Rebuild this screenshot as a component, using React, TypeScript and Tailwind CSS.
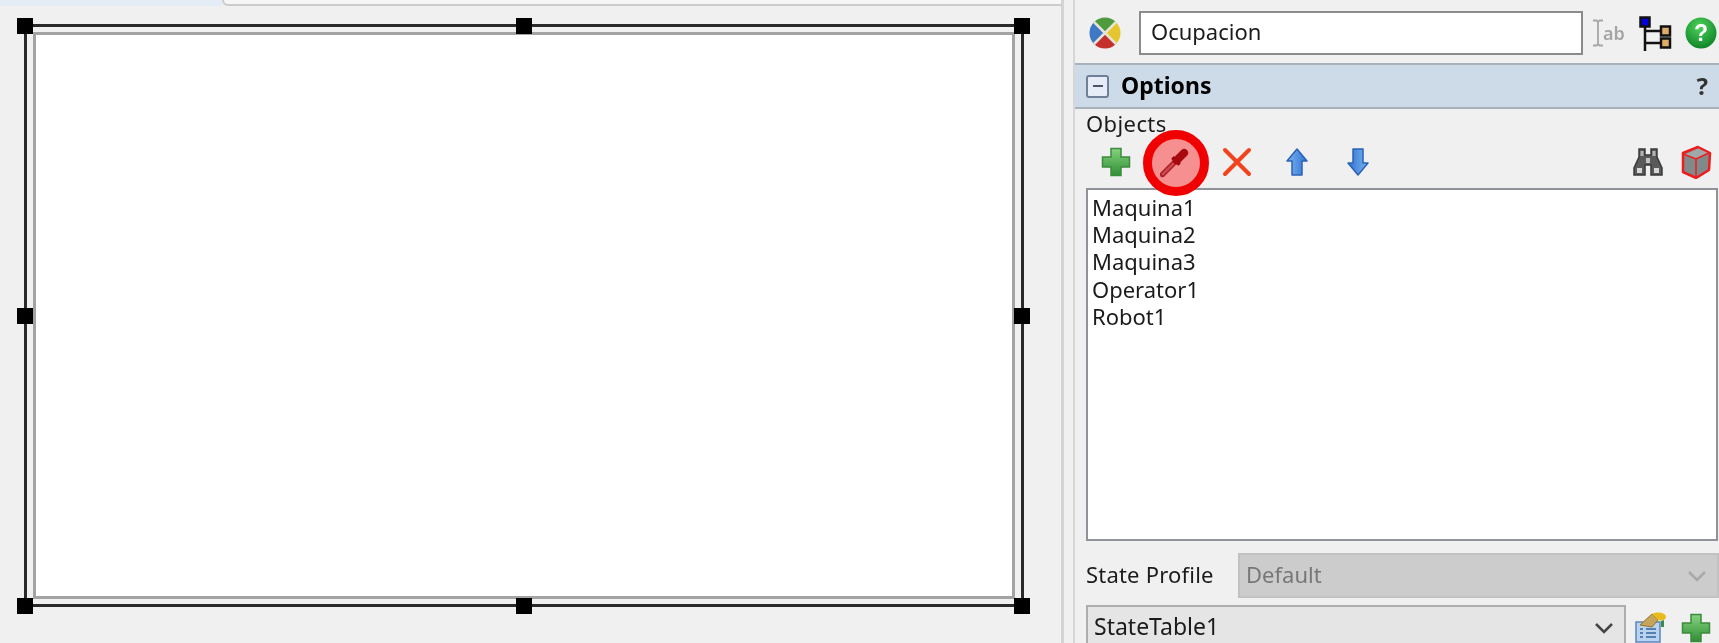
const objects = ['Maquina1', 'Maquina2', 'Maquina3', 'Operator1', 'Robot1']

const handles = [
  'left-[-9.500px] top-[-9.500px]',
  'left-1/2 top-[-9.500px] -translate-x-1/2',
  'right-[-9.500px] top-[-9.500px]',
  'left-[-9.500px] top-1/2 -translate-y-1/2',
  'right-[-9.500px] top-1/2 -translate-y-1/2',
  'left-[-9.500px] bottom-[-9.500px]',
  'left-1/2 bottom-[-9.500px] -translate-x-1/2',
  'right-[-9.500px] bottom-[-9.500px]',
]

function PlusIcon({ id }: { id: string }) {
  return (
    <svg width="30" height="30" viewBox="0 0 30 30">
      <defs>
        <linearGradient id={id} x1="0" y1="0" x2="0" y2="1">
          <stop offset="0" stopColor="#86d27f" />
          <stop offset="1" stopColor="#2f8f35" />
        </linearGradient>
      </defs>
      <path
        d="M10 1.500h10v8.500h8.500v10H20v8.500H10V20H1.500V10H10z"
        fill={`url(#${id})`}
        stroke="#3c8a3c"
        strokeWidth="1.500"
      />
    </svg>
  )
}

function Dropper() {
  return (
    <svg width="36" height="36" viewBox="0 0 36 36">
      <path d="M3 33L19 17" stroke="#6e3a44" strokeWidth="6.500" strokeLinecap="round" />
      <path d="M3.500 32.500L19 17" stroke="#b27580" strokeWidth="3" strokeLinecap="round" />
      <path d="M15 12.500l8.500 8.500" stroke="#4f0810" strokeWidth="4.500" />
      <path d="M20 16l9-9" stroke="#6e0f18" strokeWidth="9.500" strokeLinecap="round" />
    </svg>
  )
}

function CrossIcon() {
  return (
    <svg width="30" height="30" viewBox="0 0 30 30">
      <path d="M3 3l24 24M27 3L3 27" stroke="#f0431e" strokeWidth="4" strokeLinecap="round" />
    </svg>
  )
}

function ArrowIcon({ down = false }: { down?: boolean }) {
  const id = down ? 'arrowDown' : 'arrowUp'
  return (
    <svg width="24" height="30" viewBox="0 0 24 30" className={down ? 'rotate-180' : ''}>
      <defs>
        <linearGradient id={id} x1="0" y1="0" x2="1" y2="0">
          <stop offset="0" stopColor="#7db4f2" />
          <stop offset="1" stopColor="#2f72cf" />
        </linearGradient>
      </defs>
      <path d="M12 2L22 14h-5v14H7V14H2z" fill={`url(#${id})`} stroke="#2a62b8" strokeWidth="1.500" strokeLinejoin="round" />
    </svg>
  )
}

function Binoculars() {
  return (
    <svg width="32" height="30" viewBox="0 0 32 30">
      <path d="M7 2h6v6h6V2h6v8l5 11v7H19V18h-6v10H2v-7L7 10z" fill="#5a5a5a" stroke="#3a3a3a" strokeWidth="1.500" />
      <rect x="8.500" y="4" width="3" height="5" fill="#b5b5b5" />
      <rect x="20.500" y="4" width="3" height="5" fill="#b5b5b5" />
      <rect x="5" y="21" width="5" height="5" fill="#d6d6d6" />
      <rect x="22" y="21" width="5" height="5" fill="#d6d6d6" />
      <rect x="14" y="11" width="4" height="5" fill="#c4c4c4" />
    </svg>
  )
}

function Cube() {
  return (
    <svg width="32" height="34" viewBox="0 0 32 34">
      <path d="M3 8L18 2l12 6-1 17-13 8-13-6z" fill="#808a8a" stroke="#f01c1c" strokeWidth="2.500" strokeLinejoin="round" />
      <path d="M5 9.500L18 3.500l10 4.500-12 5.500z" fill="#a0a8a8" />
      <path d="M3 9l13 5 13-6M16 14v19" fill="none" stroke="#f01c1c" strokeWidth="1.500" />
    </svg>
  )
}

function ColorBall() {
  return (
    <svg width="32" height="32" viewBox="0 0 32 32">
      <clipPath id="ball">
        <circle cx="16" cy="16" r="15.500" />
      </clipPath>
      <g clipPath="url(#ball)">
        <path d="M16 16L0 0h32z" fill="#4f9a3c" />
        <path d="M16 16L32 0v32z" fill="#e6c62e" />
        <path d="M16 16L32 32H0z" fill="#c4302b" />
        <path d="M16 16L0 32V0z" fill="#3f78c4" />
      </g>
      <path d="M16 16L5 5M16 16l11-11M16 16l11 11M16 16L5 27" stroke="#e4e4d8" strokeWidth="2.500" />
    </svg>
  )
}

function RenameIcon() {
  return (
    <svg width="36" height="28" viewBox="0 0 36 28">
      <path d="M2 1.500h3.500L7 3l1.500-1.500H12M7 3v22M2 26.500h3.500L7 25l1.500 1.500H12" fill="none" stroke="#a6a6a6" strokeWidth="1.800" />
      <text x="12" y="21" fontSize="18" fontWeight="600" fill="#a5a5a5" fontFamily="Noto Sans, sans-serif">ab</text>
    </svg>
  )
}

function TreeIcon() {
  return (
    <svg width="33" height="35" viewBox="0 0 33 35">
      <path d="M6 8v27M6 15h20M6 27h20" stroke="#111" strokeWidth="2.500" />
      <rect x="1.500" y="1.500" width="9" height="9" fill="#0000e0" stroke="#111" strokeWidth="2.500" />
      <rect x="22" y="10.500" width="9" height="9" fill="#e0ad66" stroke="#111" strokeWidth="2.500" />
      <rect x="22" y="22.500" width="9" height="9" fill="#e0ad66" stroke="#111" strokeWidth="2.500" />
    </svg>
  )
}

function HelpIcon() {
  return (
    <svg width="32" height="32" viewBox="0 0 32 32">
      <defs>
        <radialGradient id="green" cx="0.450" cy="0.300" r="0.800">
          <stop offset="0" stopColor="#4fd25c" />
          <stop offset="1" stopColor="#067a20" />
        </radialGradient>
      </defs>
      <circle cx="16" cy="16" r="15.500" fill="url(#green)" />
      <text x="16" y="24" textAnchor="middle" fontSize="23" fontWeight="700" fill="#fff" fontFamily="Liberation Sans, sans-serif">?</text>
    </svg>
  )
}

function TableIcon() {
  return (
    <svg width="34" height="31" viewBox="0 0 34 31">
      <rect x="2" y="10" width="24" height="20" fill="#b9d2ee" stroke="#5a86bd" strokeWidth="1.500" />
      <path d="M6 17h3M12 17h10M6 21h3M12 21h10M6 25h3M12 25h10" stroke="#34659f" strokeWidth="1.500" />
      <path d="M6 13L18 2l6 6-6 7z" fill="#c6a45a" stroke="#8f7430" strokeWidth="1" />
      <path d="M18 2c6-3 14-1 14 3 0 3-5 4-8 3z" fill="#e8bc20" />
      <path d="M30 8v7h-3V9z" fill="#3f8a50" />
    </svg>
  )
}

function Chevron({ muted = false }: { muted?: boolean }) {
  return (
    <svg width="20" height="12" viewBox="0 0 20 12">
      <path d="M2 2l8 8 8-8" fill="none" stroke={muted ? '#a9a9a9' : '#444'} strokeWidth="2.500" />
    </svg>
  )
}

export default function App() {
  return (
    <div className="flex h-[643px] w-[1719px] overflow-hidden bg-[#f0f0f0] font-['Noto_Sans',sans-serif] text-[22px] leading-none text-[#1b1b1b] blur-[0.6px]">
      {/* canvas side */}
      <div className="flex h-full w-[1075px] shrink-0 border-r-[2px] border-r-[#d6d6d6] pr-[9px]">
        <div className="flex h-full flex-1 flex-col border-r-[3px] border-r-[#d4d4d4]">
          <div className="flex h-[6px] shrink-0">
            <div className="w-[222px] bg-[#e4edf6]" />
            <div className="flex-1 rounded-bl-md border-b-[2px] border-l-[2px] border-[#cccccc] bg-[#f6f6f6]" />
          </div>
          <div className="relative ml-[23.500px] mt-[18px] h-[583px] w-[1000px] border-[3px] border-[#2a2a2a]">
            <div className="mx-[6px] my-[5px] h-[calc(100%-10px)] border-[3px] border-[#a3a3a3] bg-white" />
            {handles.map((pos) => (
              <div key={pos} className={`absolute h-[16px] w-[16px] bg-black ${pos}`} />
            ))}
          </div>
        </div>
      </div>

      {/* properties side */}
      <div className="flex min-w-0 flex-1 flex-col">
        <div className="flex h-[63px] shrink-0 items-center pl-[14px] pt-[3px]">
          <ColorBall />
          <div className="ml-[18px] flex h-[44px] w-[444px] items-center border-[2px] border-[#8b8b8b] bg-white pb-[4px] pl-[10px]">
            Ocupacion
          </div>
          <div className="ml-[8px]"><RenameIcon /></div>
          <div className="ml-[12px]"><TreeIcon /></div>
          <div className="ml-[13px]"><HelpIcon /></div>
        </div>

        <div className="flex h-[46px] shrink-0 items-center border-y-[2px] border-y-[#a9b1ba] bg-[#cddbe8] pl-[11px] pr-[11px]">
          <div className="flex h-[23px] w-[23px] items-center justify-center rounded-[3px] border-[2px] border-[#6f8098] bg-[#e6edf6]">
            <div className="h-[2px] w-[10px] bg-[#4a5568]" />
          </div>
          <span className="ml-[12px] pb-[2px] text-[23px] font-bold text-black">Options</span>
          <span className="ml-auto text-[24px] font-bold text-[#333]">?</span>
        </div>

        <div className="relative flex min-h-0 flex-1 flex-col pl-[11px]">
          <div className="mt-[3px] h-[22px] tracking-[0.4px]">Objects</div>

          <div className="mt-[9px] flex h-[38px] shrink-0 items-center pl-[15px] pr-[7px]">
            <div className="flex w-[30px] justify-center"><PlusIcon id="plusTop" /></div>
            <div className="ml-[29px] flex w-[30px] justify-center"><Dropper /></div>
            <div className="ml-[32px] flex w-[30px] justify-center"><CrossIcon /></div>
            <div className="ml-[30px] flex w-[30px] justify-center"><ArrowIcon /></div>
            <div className="ml-[31px] flex w-[30px] justify-center"><ArrowIcon down /></div>
            <div className="ml-auto"><Binoculars /></div>
            <div className="ml-[16px]"><Cube /></div>
          </div>

          <div className="mr-[1px] mt-[7px] h-[353px] shrink-0 border-[2px] border-[#8f9298] bg-white pl-[4px] pt-[5px]">
            {objects.map((name) => (
              <div key={name} className="flex h-[27.4px] items-center pb-[4px]">{name}</div>
            ))}
          </div>

          <div className="mt-[12px] flex h-[45px] shrink-0 items-center">
            <span className="w-[152px] pb-[4px] tracking-[0.2px]">State Profile</span>
            <div className="flex h-full flex-1 items-center justify-between border-[2px] border-[#c2c2c2] bg-[#cccccc] pl-[6px] pr-[10px] text-[#777]">
              <span className="pb-[3px]">Default</span>
              <Chevron muted />
            </div>
          </div>

          <div className="mt-[7px] flex h-[50px] shrink-0 items-start">
            <div className="flex h-full w-[540px] items-center justify-between border-[2px] border-[#adadad] bg-[#e5e5e5] pb-[4px] pl-[6px] pr-[10px] text-[23px]">
              <span className="pb-[4px]">StateTable1</span>
              <Chevron />
            </div>
            <div className="ml-[8px] mt-[7px]"><TableIcon /></div>
            <div className="ml-[13px] mt-[8px]"><PlusIcon id="plusBottom" /></div>
          </div>

          {/* red annotation round the dropper */}
          <div className="absolute left-[68px] top-[21px] h-[66px] w-[66px] rounded-full border-[9px] border-[#f00000] bg-[#ff0000]/40" />
        </div>
      </div>
    </div>
  )
}
